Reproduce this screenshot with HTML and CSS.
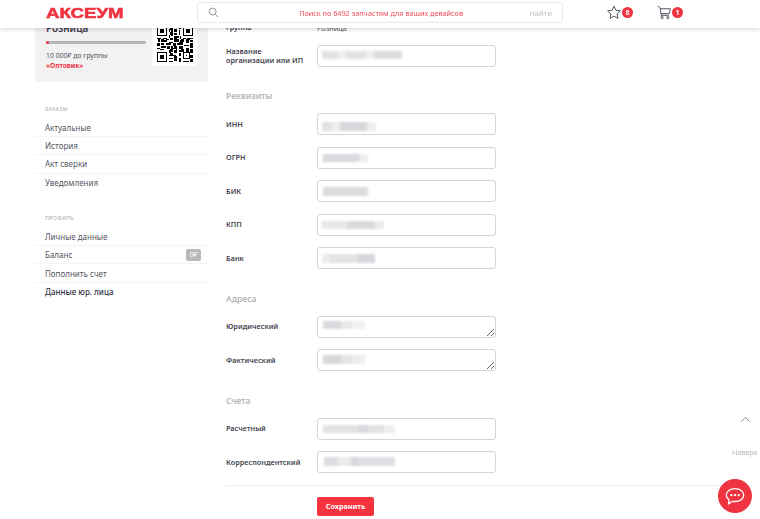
FILE: index.html
```html
<!DOCTYPE html>
<html lang="ru">
<head>
    <meta charset="UTF-8">
    <meta name="viewport" content="width=device-width, initial-scale=1.0">
    <title>Аксеум — данные юр. лица</title>
    <link rel="stylesheet" href="styles.css">
</head>
<body>
    <header class="header">
        <a class="logo" href="#">АКСЕУМ</a>
        <div class="search">
            <svg class="search-icon" viewBox="0 0 12 12" width="11" height="11"><circle cx="5" cy="5" r="3.8"/><path d="M8 8l3 3"/></svg>
            <span class="search-text">Поиск по 6492 запчастям для ваших девайсов</span>
            <span class="search-btn">Найти</span>
        </div>
        <div class="header-icon star">
            <svg viewBox="0 0 16 16" width="16" height="15"><path d="M8 1.2l2 4.4 4.8.6-3.5 3.3.9 4.8L8 11.9l-4.2 2.4.9-4.8L1.2 6.2 6 5.6z"/></svg>
            <span class="count">8</span>
        </div>
        <div class="header-icon cart">
            <svg viewBox="0 0 16 16" width="15" height="15"><path d="M.8 1l2.6 2 1 8h8.2"/><path d="M3.6 4h10.6l-1 5.2H4.2"/><circle cx="5.5" cy="13.4" r="1.2"/><circle cx="11.5" cy="13.4" r="1.2"/></svg>
            <span class="count">1</span>
        </div>
    </header>

    <div class="page">
        <aside class="sidebar">
            <div class="card">
                <div class="card-info">
                    <div class="card-title">Розница</div>
                    <div class="progress"><div class="progress-fill"></div></div>
                    <div class="card-note">10 000₽ до группы</div>
                    <div class="card-next">«Оптовик»</div>
                </div>
                <div class="qr">
                    <svg viewBox="0 0 25 25" width="36" height="36" shape-rendering="crispEdges"><path d="M0 0h7v7H0zM1 1v5h5V1zM2 2h3v3H2zM18 0h7v7h-7zM19 1v5h5V1zM20 2h3v3h-3zM0 18h7v7H0zM1 19v5h5v-5zM2 20h3v3H2z" fill-rule="evenodd"/><path d="M8 0h2v1H8zM11 0h3v1h-3zM15 0h2v2h-2zM9 1h2v1H9zM8 2h3v1H8zM12 2h2v2h-2zM8 3h1v1H8zM10 3h1v1h-1zM9 4h2v2H9zM15 3h1v3h-1zM12 5h2v1h-2zM8 6h1v2H8zM10 6h1v1h-1zM12 7h3v1h-3zM16 7h1v2h-1zM0 8h3v1H0zM4 8h3v1H4zM9 8h2v2H9zM12 8h2v1h-2zM18 8h2v1h-2zM21 8h4v1h-4zM1 9h1v2H1zM3 9h2v1H3zM6 9h2v1H6zM17 9h2v1h-2zM20 9h3v1h-3zM3 10h4v1H3zM8 11h3v1H8zM12 9h3v2h-3zM16 10h3v1h-3zM20 10h2v2h-2zM23 10h2v1h-2zM0 12h2v2H0zM3 12h2v1H3zM6 12h4v1H6zM11 12h2v2h-2zM14 12h4v1h-4zM15 11h3v1h-3zM19 13h3v1h-3zM23 12h2v3h-2zM3 14h3v1H3zM7 14h2v2H7zM10 14h1v1h-1zM12 14h2v1h-2zM10 15h4v1H10zM15 14h3v2h-3zM20 15h2v2h-2zM0 15h2v1H0zM2 16h3v1H2zM9 16h2v1H9zM13 16h1v1h-1zM17 16h2v1h-2zM8 17h3v1H8zM12 17h2v2h-2zM15 17h4v1h-4zM20 17h2v1h-2zM23 16h2v3h-2zM8 18h2v1H8zM9 19h2v2H9zM15 19h2v2h-2zM18 18h5v5h-5zM8 20h1v1H8zM11 20h2v1h-2zM8 22h3v1H8zM12 21h2v3h-2zM15 22h2v3h-2zM23 20h2v2h-2zM8 24h3v1H8zM18 24h4v1h-4zM23 23h2v2h-2z"/><path class="qr-hole" d="M19 19h3v3h-3z"/><path d="M20 20h1v1h-1z"/></svg>
                </div>
            </div>

            <nav class="menu">
                <div class="menu-title">Заказы</div>
                <a class="menu-item" href="#">Актуальные</a>
                <a class="menu-item" href="#">История</a>
                <a class="menu-item" href="#">Акт сверки</a>
                <a class="menu-item" href="#">Уведомления</a>
            </nav>

            <nav class="menu">
                <div class="menu-title">Профиль</div>
                <a class="menu-item" href="#">Личные данные</a>
                <a class="menu-item" href="#">Баланс <span class="balance">0₽</span></a>
                <a class="menu-item" href="#">Пополнить счет</a>
                <a class="menu-item active" href="#">Данные юр. лица</a>
            </nav>
        </aside>

        <main class="form">
            <div class="row row-text">
                <label>Группа</label>
                <span class="row-value">Розница</span>
            </div>
            <div class="row">
                <label>Название организации или ИП</label>
                <div class="field"><input type="text"><span class="smudge s-name"></span></div>
            </div>

            <h3 class="section">Реквизиты</h3>
            <div class="row">
                <label>ИНН</label>
                <div class="field"><input type="text"><span class="smudge s-inn"></span></div>
            </div>
            <div class="row">
                <label>ОГРН</label>
                <div class="field"><input type="text"><span class="smudge s-ogrn"></span></div>
            </div>
            <div class="row">
                <label>БИК</label>
                <div class="field"><input type="text"><span class="smudge s-bik"></span></div>
            </div>
            <div class="row">
                <label>КПП</label>
                <div class="field"><input type="text"><span class="smudge s-kpp"></span></div>
            </div>
            <div class="row">
                <label>Банк</label>
                <div class="field"><input type="text"><span class="smudge s-bank"></span></div>
            </div>

            <h3 class="section">Адреса</h3>
            <div class="row">
                <label>Юридический</label>
                <div class="field"><textarea></textarea><span class="smudge s-addr"></span></div>
            </div>
            <div class="row">
                <label>Фактический</label>
                <div class="field"><textarea></textarea><span class="smudge s-addr2"></span></div>
            </div>

            <h3 class="section">Счета</h3>
            <div class="row">
                <label>Расчетный</label>
                <div class="field"><input type="text"><span class="smudge s-acc"></span></div>
            </div>
            <div class="row">
                <label>Корреспондентский</label>
                <div class="field"><input type="text"><span class="smudge s-corr"></span></div>
            </div>

            <div class="actions">
                <button class="save" type="button">Сохранить</button>
            </div>
        </main>
    </div>

    <a class="to-top" href="#">
        <svg viewBox="0 0 12 8" width="11" height="7"><path d="M1 6.5l5-5 5 5"/></svg>
    </a>
    <a class="to-top-label" href="#">Наверх</a>
    <button class="chat" type="button">
        <svg viewBox="0 0 24 24" width="22" height="22"><path d="M12 4c5.5 0 9.500 2.900 9.500 7s-4 7-9.500 7c-.9 0-1.700-.1-2.500-.2L5 20.500l.6-4C3.600 15.100 2.500 13.200 2.500 11 2.500 6.900 6.500 4 12 4z"/><circle class="dot" cx="8" cy="11" r="1.300"/><circle class="dot" cx="12" cy="11" r="1.300"/><circle class="dot" cx="16" cy="11" r="1.300"/></svg>
    </button>
</body>
</html>
```

FILE: styles.css
```css
* { box-sizing: border-box; }
html, body { height: 100%; }
body {
    margin: 0;
    overflow: hidden;
    background: white;
    color: #3b3b4b;
    font-family: "Noto Sans", "Open Sans", sans-serif;
    font-size: 8px;
}
a { color: inherit; text-decoration: none; }

.header {
    position: fixed;
    top: 0;
    left: 0;
    right: 0;
    z-index: 5;
    height: 28px;
    display: flex;
    align-items: center;
    background: white;
    box-shadow: 0 1px 5px rgba(0,0,0,0.18);
}
.logo {
    width: 151px;
    margin-left: 46px;
    margin-top: -3px;
    color: #ef3340;
    font-family: "Liberation Sans", sans-serif;
    font-weight: bold;
    font-size: 15.5px;
    line-height: 16px;
    -webkit-text-stroke: 0.6px #ef3340;
    transform: scaleX(1.2);
    transform-origin: left center;
}
.search {
    width: 366px;
    height: 21px;
    margin-top: -3px;
    padding: 0 10px 0 10px;
    display: flex;
    align-items: center;
    border: 1px solid #e8e8e8;
    border-radius: 3px;
    background: white;
}
.search-icon { fill: none; stroke: #8a8a8a; stroke-width: 1; flex: none; }
.search-text {
    flex: 1;
    padding-left: 14px;
    text-align: center;
    color: #ef4a55;
    font-size: 7.25px;
}
.search-btn { color: #c4c4c4; font-size: 7.6px; }

.header-icon {
    display: flex;
    align-items: center;
    margin-top: -3px;
}
.header-icon svg { fill: none; stroke: #4a4a58; stroke-width: 1; }
.star { margin-left: 43px; }
.cart { margin-left: 24px; }
.count {
    width: 11px;
    height: 11px;
    border-radius: 50%;
    background: #ef3340;
    color: white;
    font-size: 7px;
    font-weight: 700;
    line-height: 11px;
    text-align: center;
}

.page {
    display: flex;
    padding: 14px 8px 0 35px;
}
.sidebar { width: 173px; flex: none; }
.card {
    height: 68px;
    display: flex;
    gap: 6px;
    padding: 8px 0 0 11px;
    border-radius: 2px;
    background: #f2f2f2;
}
.card-info { width: 100px; }
.card-title {
    font-size: 10px;
    font-weight: 600;
    line-height: 12px;
}
.progress {
    height: 3px;
    margin-top: 7px;
    border-radius: 2px;
    background: #b4b4b9;
}
.progress-fill {
    width: 3px;
    height: 3px;
    border-radius: 2px;
    background: #ef3340;
}
.card-note { margin-top: 7px; font-size: 6.9px; line-height: 10px; color: #55555f; }
.card-next { font-size: 6.6px; line-height: 10px; font-weight: 700; color: #ef3340; }
.qr {
    width: 45px;
    height: 45px;
    margin-top: -1px;
    padding: 5px 4px 4px 5px;
    background: white;
}
.qr svg { display: block; filter: blur(0.35px); }
.qr-hole { fill: white; }

.menu { margin-top: 22px; }
.card + .menu { margin-top: 23px; }
.menu-title {
    margin-bottom: 5.5px;
    padding-left: 10px;
    color: #a8a8a8;
    font-size: 5.4px;
    line-height: 8px;
    letter-spacing: 0.3px;
    text-transform: uppercase;
}
.menu-item {
    height: 18.4px;
    padding-left: 10px;
    display: flex;
    align-items: center;
    justify-content: space-between;
    border-bottom: 1px solid #f4f4f4;
    color: #55555f;
    font-size: 8px;
}
.menu-item:last-child { border-bottom: 0; }
.menu-item.active { color: #33333f; font-weight: 500; }
.balance {
    width: 15px;
    height: 12px;
    margin-right: 7px;
    border-radius: 2px;
    background: #b9b9b9;
    color: white;
    font-size: 7px;
    line-height: 12px;
    text-align: center;
}

.form {
    flex: 1;
    margin-left: 18px;
    padding-top: 8.5px;
}
.row {
    display: grid;
    grid-template-columns: 91px 179px;
    align-items: center;
    height: 22px;
    margin-bottom: 11.5px;
}
.row-text { height: 10px; margin-bottom: 12px; }
.row label {
    padding-right: 6px;
    color: #44444f;
    font-size: 7.3px;
    font-weight: 600;
    line-height: 9px;
}
.row-value { color: #55555f; font-size: 7.3px; }
.section {
    margin: 23.5px 0 11px;
    color: #b6b6b6;
    font-size: 8.5px;
    font-weight: 600;
    line-height: 12px;
}
.field { position: relative; height: 22px; }
.field input, .field textarea {
    display: block;
    width: 100%;
    height: 22px;
    margin: 0;
    border: 1px solid #d4d4d4;
    border-radius: 3px;
    background: white;
}
.smudge {
    position: absolute;
    top: 7px;
    left: 5px;
    height: 8.5px;
    filter: blur(0.8px);
}
.s-name { top: 6px; width: 80px; background: linear-gradient(90deg, #e2e2e6 0 20%, #eeeef0 20% 30%, #e2e2e6 30% 55%, #eeeef0 55% 65%, #dcdce0 65%); }
.s-inn { width: 54px; left: 5px; top: 9px; background: linear-gradient(90deg, #e2e2e4 0 18%, #eeeeee 18% 34%, #d8d8dc 34% 83%, #eeeef0 83%); }
.s-ogrn { width: 45px; left: 6px; background: linear-gradient(90deg, #d9d9de 0 80%, #eeeef0 80%); }
.s-bik { width: 45px; left: 6px; background: #dcdce0; }
.s-kpp { width: 62px; background: linear-gradient(90deg, #e8e8eb 0 40%, #dadade 40% 86%, #ececee 86%); }
.s-bank { width: 53px; background: linear-gradient(90deg, #ececec 0 15%, #e4e4e6 15% 68%, #d8d8dc 68%); }
.s-addr { top: 5px; left: 6px; width: 42px; background: linear-gradient(90deg, #dadade 0 42%, #e8e8eb 42% 70%, #f0f0f2 70%); }
.s-addr2 { top: 6px; left: 6px; width: 42px; background: linear-gradient(90deg, #d8d8dc 0 42%, #e4e4e8 42% 70%, #eeeef0 70%); }
.s-acc { width: 72px; left: 6px; background: linear-gradient(90deg, #e2e2e4 0 50%, #d8d8dc 50% 63%, #e2e2e4 63% 85%, #eeeef0 85%); }
.s-corr { width: 71px; left: 7px; top: 6px; background: linear-gradient(90deg, #dedee2 0 20%, #ebebee 20% 38%, #d8d8dc 38% 50%, #e0e0e4 50%); }

.actions {
    padding-top: 11px;
    border-top: 1px solid #ececec;
}
.save {
    display: block;
    width: 57px;
    height: 19px;
    margin: 0 0 0 91px;
    padding: 0;
    border: 0;
    border-radius: 2px;
    background: #f5333f;
    color: white;
    font-family: inherit;
    font-size: 7.2px;
    font-weight: 700;
}

.to-top {
    position: fixed;
    top: 416px;
    left: 740px;
}
.to-top svg { display: block; fill: none; stroke: #777; stroke-width: 1; }
.to-top-label {
    position: fixed;
    top: 447px;
    left: 732px;
    color: #b5b5b5;
    font-size: 7.2px;
    line-height: 10px;
}
.chat {
    position: fixed;
    top: 479px;
    left: 718px;
    width: 34px;
    height: 34px;
    padding: 0;
    display: flex;
    align-items: center;
    justify-content: center;
    border: 0;
    border-radius: 50%;
    background: #ef3340;
}
.chat svg { fill: none; stroke: white; stroke-width: 1.4; }
.chat .dot { fill: white; stroke: none; }
```
